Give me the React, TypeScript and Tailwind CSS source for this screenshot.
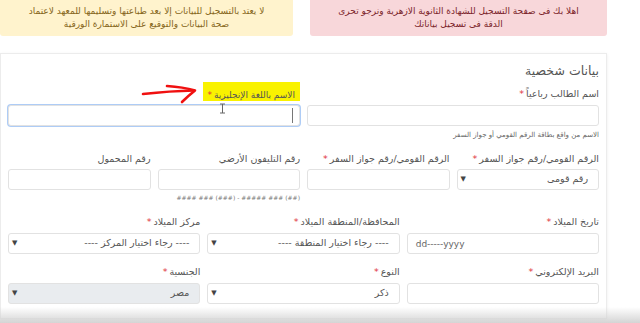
import React from "react";

const Star = () => <span className="text-[#e0323c] mr-[2px]">*</span>;

function Label({ text, req }: { text: string; req?: boolean }) {
  return (
    <div className="h-[14px] leading-[14px] text-[9.5px] text-[#555] whitespace-nowrap">
      {text}
      {req && <Star />}
    </div>
  );
}

function Input({ children, className = "" }: { children?: React.ReactNode; className?: string }) {
  return (
    <div className={`h-[21px] border border-[#e2e2e2] rounded-[3px] bg-white relative ${className}`}>{children}</div>
  );
}

function Select({ value, disabled }: { value: string; disabled?: boolean }) {
  return (
    <div
      className={`h-[21px] border border-[#e2e2e2] rounded-[3px] flex items-center justify-between pr-[10px] pl-[3px] ${
        disabled ? "bg-[#e9ecef]" : "bg-white"
      }`}
    >
      <span className="text-[9.5px] text-[#555] whitespace-nowrap">{value}</span>
      <span className="text-[7px] text-[#444]">▼</span>
    </div>
  );
}

export default function App() {
  return (
    <div
      dir="rtl"
      className="w-[640px] h-[323px] overflow-hidden bg-white relative font-['DejaVu_Sans',sans-serif]"
    >
      {/* alerts */}
      <div className="flex gap-[17px] pr-[33px] h-[36px]">
        <div className="w-[297px] bg-[#f8d7da] rounded-b-[3px] flex flex-col items-center justify-center text-[#7b1f2a] text-[9px] leading-[13px] whitespace-nowrap pb-[1px]">
          <div>اهلا بك فى صفحة التسجيل للشهادة الثانوية الازهرية ونرجو تحرى</div>
          <div>الدقة فى تسجيل بياناتك</div>
        </div>
        <div className="w-[293px] bg-[#fff3cd] rounded-b-[3px] flex flex-col items-center justify-center text-[#85651a] text-[9px] leading-[13px] whitespace-nowrap pb-[1px]">
          <div>لا يعتد بالتسجيل للبيانات إلا بعد طباعتها وتسليمها للمعهد لاعتماد</div>
          <div>صحة البيانات والتوقيع على الاستمارة الورقية</div>
        </div>
      </div>

      {/* card */}
      <div className="mt-[17px] mr-[33px] w-[607px] h-[266px] border border-[#ececec] bg-white pr-[7px] pl-[7px] pt-[8px] shadow-[0_1px_3px_rgba(0,0,0,0.08)]">
        <div className="text-[12.5px] leading-[18px] text-[#555]">بيانات شخصية</div>

        {/* row 1 */}
        <div className="grid grid-cols-2 gap-[7px] mt-[7px]">
          <div>
            <Label text="اسم الطالب رباعياً" req />
            <div className="mt-[4px]">
              <Input />
            </div>
            <div className="mt-[4px] text-[7px] leading-[10px] text-[#666]">
              الاسم من واقع بطاقة الرقم القومي أو جواز السفر
            </div>
          </div>
          <div className="relative">
            <div className="flex">
              <div className="bg-[#f9f200] h-[19px] -mt-[5px] px-[5px] pt-[6px] leading-[14px] text-[9px] text-[#555] whitespace-nowrap">
                الاسم باللغة الإنجليزية
                <Star />
              </div>
            </div>
            <div className="mt-[4px]">
              <Input className="border-[#8fbff5] shadow-[0_0_0_1px_rgba(120,170,240,0.6)]">
                <span className="absolute right-[6px] top-[2px] w-[1px] h-[15px] bg-[#777]" />
              </Input>
            </div>
          </div>
        </div>

        {/* row 2 */}
        <div className="grid grid-cols-4 gap-[7px] mt-[12px]">
          <div>
            <Label text="الرقم القومي/رقم جواز السفر" req />
            <div className="mt-[3px]">
              <Select value="رقم قومى" />
            </div>
          </div>
          <div>
            <Label text="الرقم القومي/رقم جواز السفر" req />
            <div className="mt-[3px]">
              <Input />
            </div>
          </div>
          <div>
            <Label text="رقم التليفون الأرضي" />
            <div className="mt-[3px]">
              <Input />
            </div>
            <div className="mt-[3px] text-[6px] leading-[10px] text-[#777] whitespace-nowrap" dir="ltr">
              <div className="text-right">#### ### (###) - ##### ### (##)</div>
            </div>
          </div>
          <div>
            <Label text="رقم المحمول" />
            <div className="mt-[3px]">
              <Input />
            </div>
          </div>
        </div>

        {/* row 3 */}
        <div className="grid grid-cols-3 gap-[7px] mt-[12px]">
          <div>
            <Label text="تاريخ الميلاد" req />
            <div className="mt-[4px]">
              <Input className="flex items-center">
                <span dir="ltr" className="absolute left-[8px] top-[4px] text-[9px] text-[#666]">
                  dd-----yyyy
                </span>
              </Input>
            </div>
          </div>
          <div>
            <Label text="المحافظة/المنطقة الميلاد" req />
            <div className="mt-[4px]">
              <Select value="---- رجاء اختيار المنطقة ----" />
            </div>
          </div>
          <div>
            <Label text="مركز الميلاد" req />
            <div className="mt-[4px]">
              <Select value="---- رجاء اختيار المركز ----" />
            </div>
          </div>
        </div>

        {/* row 4 */}
        <div className="grid grid-cols-3 gap-[7px] mt-[11px]">
          <div>
            <Label text="البريد الإلكتروني" req />
            <div className="mt-[4px]">
              <Input />
            </div>
          </div>
          <div>
            <Label text="النوع" req />
            <div className="mt-[4px]">
              <Select value="ذكر" />
            </div>
          </div>
          <div>
            <Label text="الجنسية" req />
            <div className="mt-[4px]">
              <Select value="مصر" disabled />
            </div>
          </div>
        </div>
      </div>

      {/* red arrow */}
      <svg className="absolute left-0 top-0 pointer-events-none" width="640" height="323">
        <g fill="none" stroke="#f01010" strokeWidth="2.6" strokeLinecap="round" strokeLinejoin="round">
          <path d="M143 94 Q170 91 194 90.5" />
          <path d="M167 86 Q183 87 195 90.5 Q188 96 182 102" />
        </g>
        <g stroke="#666" strokeWidth="1" fill="none">
          <path d="M222.5 104 V113" />
          <path d="M220 104 H225" />
          <path d="M220 113 H225" />
        </g>
      </svg>

      {/* bottom vignette */}
      <div className="absolute left-0 right-0 bottom-0 h-[16px] bg-gradient-to-b from-transparent to-[#d4d4d4] pointer-events-none" />
    </div>
  );
}
